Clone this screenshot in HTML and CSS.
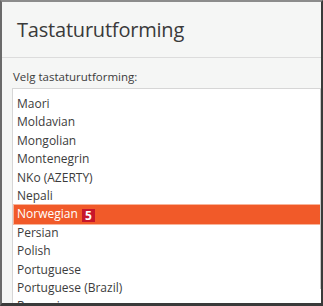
FILE: index.html
```html
<!DOCTYPE html>
<html lang="nb">
<head>
  <meta charset="UTF-8" />
  <title>Tastaturutforming</title>
  <link rel="stylesheet" href="styles.css">
</head>
<body>
  <div class="window">
    <header class="header">
      <h1>Tastaturutforming</h1>
    </header>

    <main class="content">
      <p class="label">Velg tastaturutforming:</p>
      <div class="listbox">
        <ul class="layouts">
          <li>Maori</li>
          <li>Moldavian</li>
          <li>Mongolian</li>
          <li>Montenegrin</li>
          <li>NKo (AZERTY)</li>
          <li>Nepali</li>
          <li class="selected">Norwegian <span class="badge">5</span></li>
          <li>Persian</li>
          <li>Polish</li>
          <li>Portuguese</li>
          <li>Portuguese (Brazil)</li>
          <li>Romanian</li>
        </ul>
        <div class="scrollbar"></div>
      </div>
    </main>
  </div>
</body>
</html>
```

FILE: styles.css
```css
body {
  margin: 0;
  padding: 0;
  background-color: #2b2b2b;
  font-family: 'Open Sans', 'DejaVu Sans', sans-serif;
  color: #3c3c3c;
}
.window {
  width: 323px;
  height: 306px;
  box-sizing: border-box;
  border-top: 2px solid #8c8c8c;
  border-left: 2px solid #6a6a6a;
  border-right: 2px solid #3a3a3a;
  border-bottom: 3px solid #3a3a3a;
  background-color: #f5f6f5;
  overflow: hidden;
  display: flex;
  flex-direction: column;
}
.header {
  height: 55px;
  flex-shrink: 0;
  border-bottom: 1px solid #dcdcdc;
  display: flex;
  align-items: center;
  padding-left: 15px;
}
.header h1 {
  margin: 0;
  font-size: 20px;
  font-weight: 400;
  color: #3a3a3a;
  letter-spacing: -0.2px;
}
.content {
  flex: 1;
  display: flex;
  flex-direction: column;
  padding: 12px 0 0 10px;
  min-height: 0;
}
.label {
  margin: 0 0 5px 1px;
  font-size: 11.5px;
  line-height: 13px;
  color: #3c3c3c;
}
.listbox {
  flex: 1;
  position: relative;
  background-color: #ffffff;
  border-top: 1px solid #d6d6d6;
  border-left: 1px solid #d6d6d6;
  overflow: hidden;
}
.layouts {
  list-style: none;
  margin: 0;
  padding: 6px 0 0 1px;
}
.layouts li {
  height: 18.4px;
  line-height: 18.4px;
  padding-left: 3px;
  font-size: 12px;
  white-space: nowrap;
}
.layouts li.selected {
  background-color: #f15a29;
  color: #ffffff;
  box-shadow: 0 0 0 1px #f8b49a;
}
.badge {
  display: inline-block;
  background-color: #c7162b;
  color: #ffffff;
  font-weight: 700;
  font-size: 12px;
  line-height: 13px;
  padding: 0 3px;
  margin-left: 1px;
  vertical-align: middle;
}
.scrollbar {
  position: absolute;
  right: 0;
  top: 0;
  width: 1px;
  height: 200px;
  background-color: #c8c8c8;
}
```
